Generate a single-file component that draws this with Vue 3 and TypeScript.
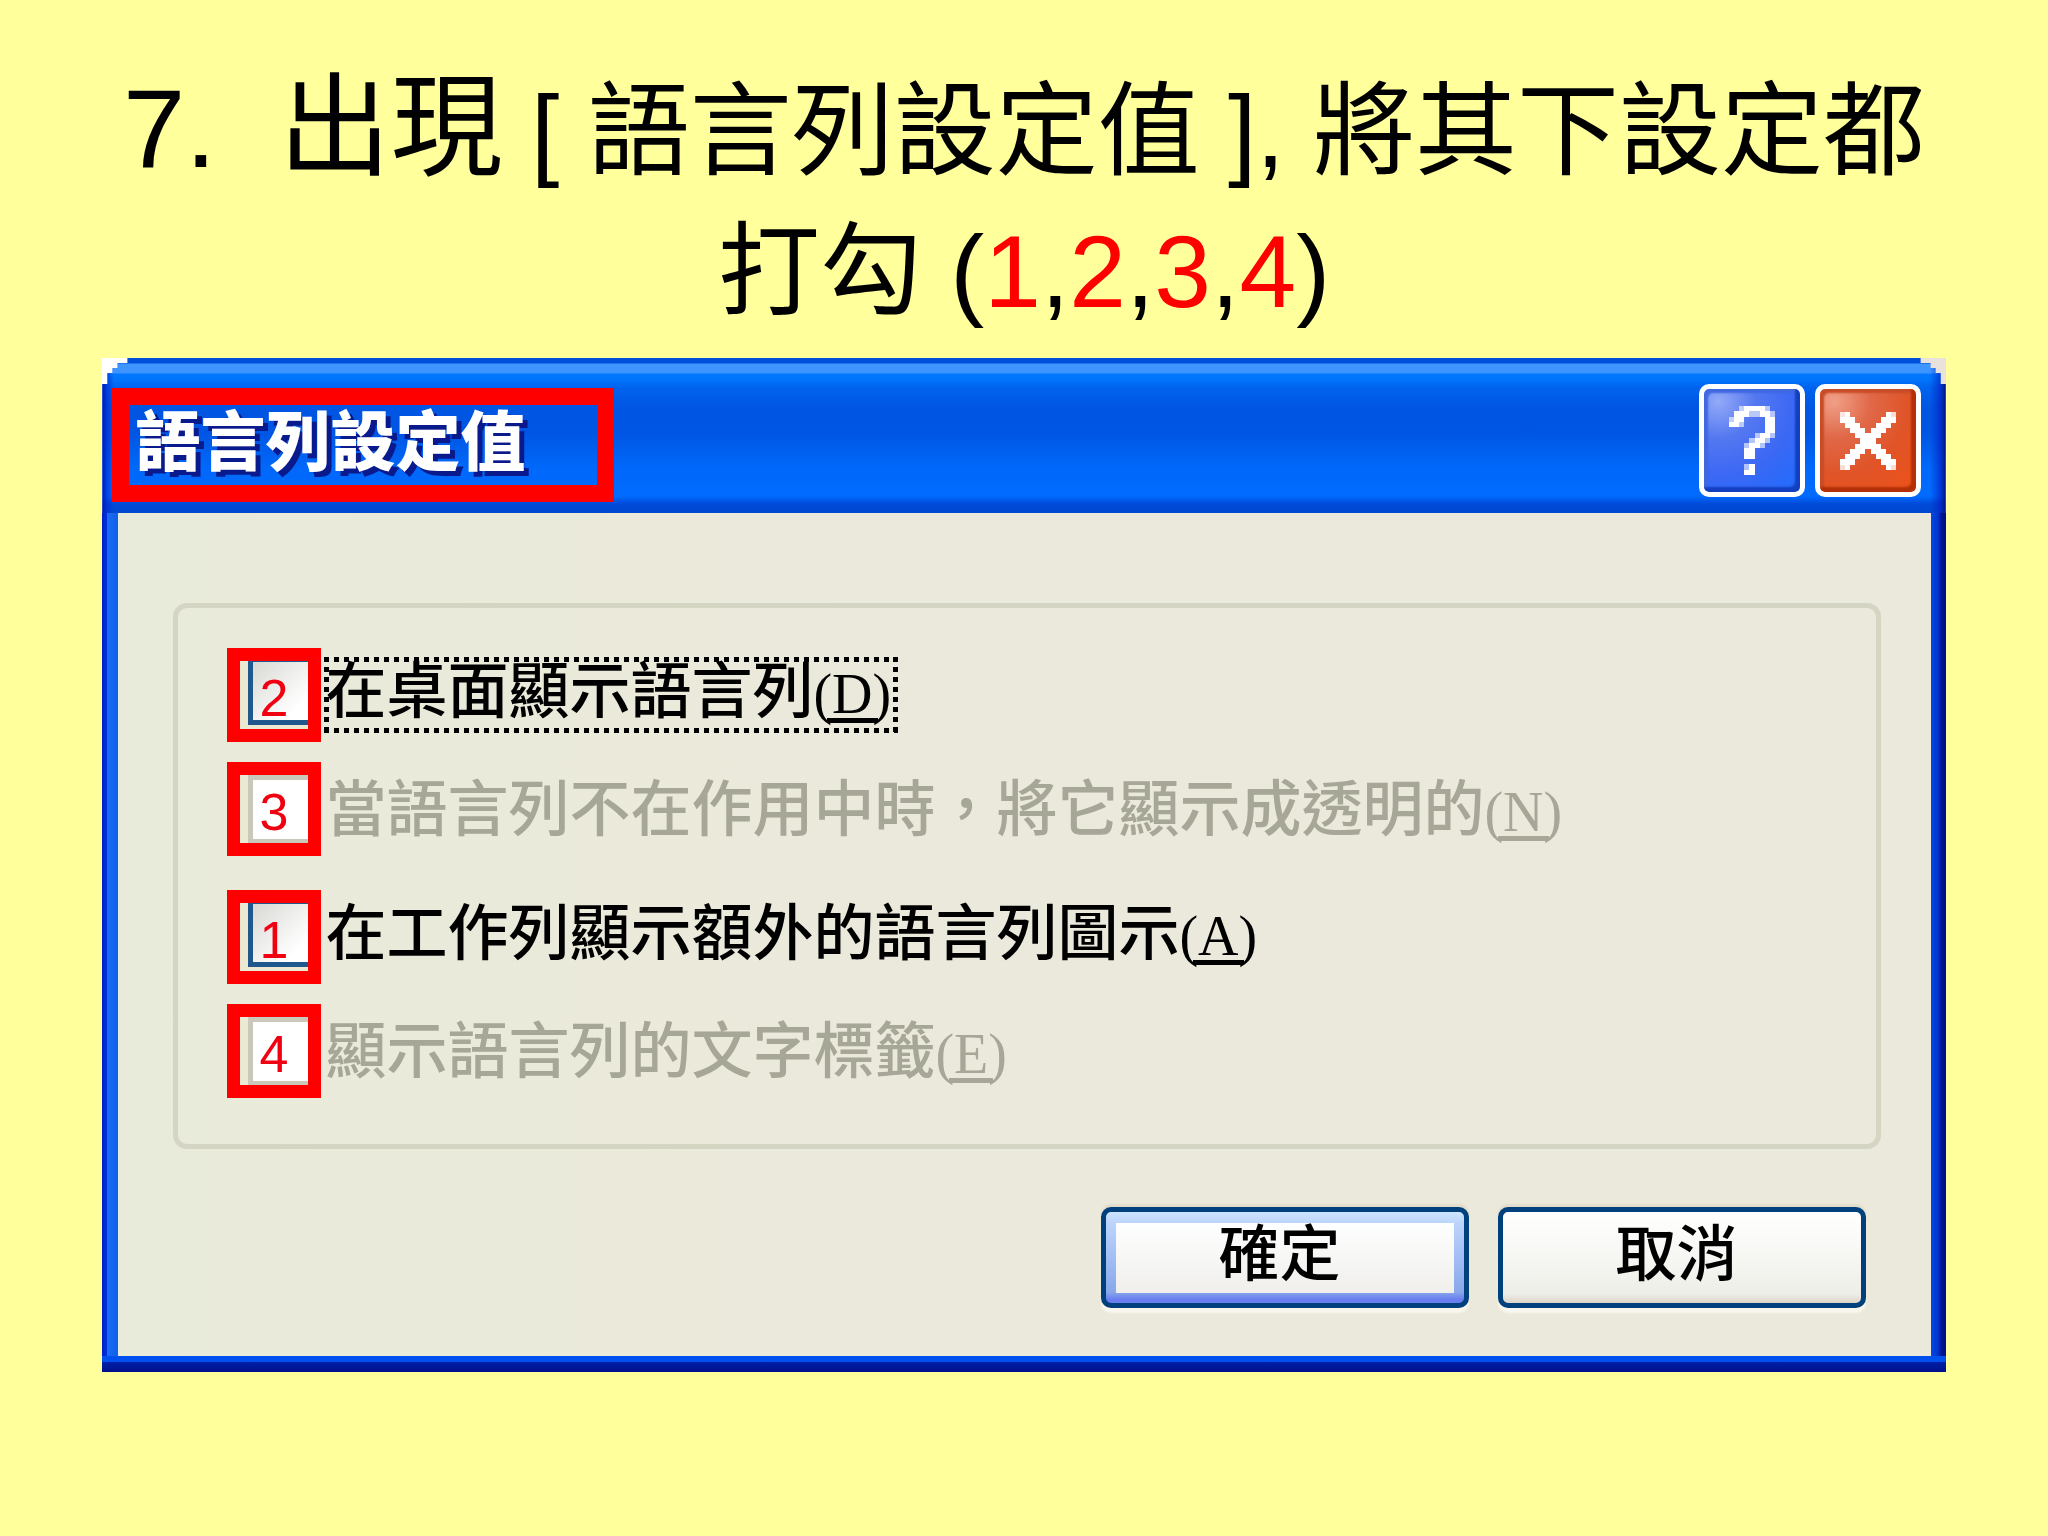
<script setup lang="ts">
import { ref } from 'vue'

interface Option {
  id: string
  mark: string
  text: string
  key: string
  disabled: boolean
  focused: boolean
}

const groups: Option[][] = [
  [
    { id: 'desktop', mark: '2', text: '在桌面顯示語言列', key: 'D', disabled: false, focused: true },
    { id: 'transparent', mark: '3', text: '當語言列不在作用中時，將它顯示成透明的', key: 'N', disabled: true, focused: false },
  ],
  [
    { id: 'taskbar', mark: '1', text: '在工作列顯示額外的語言列圖示', key: 'A', disabled: false, focused: false },
    { id: 'labels', mark: '4', text: '顯示語言列的文字標籤', key: 'E', disabled: true, focused: false },
  ],
]

const checked = ref<string[]>([])

interface Pixel {
  x: number
  y: number
  soft: boolean
}

// "#" is a solid pixel, "+" a softened one
function pixels(rows: string[]): Pixel[] {
  return rows.flatMap((row, y) =>
    [...row].flatMap((c, x) => (c === '.' ? [] : [{ x, y, soft: c === '+' }])),
  )
}

const helpIcon = pixels([
  '..+####+.',
  '.###++##+',
  '+##....##',
  '##+....##',
  '.......##',
  '.....+##+',
  '....+##+.',
  '...+##+..',
  '...##....',
  '...##....',
  '.........',
  '...+#....',
  '...##....',
])

const closeIcon = pixels([
  '+#.......#+',
  '###.....###',
  '.###...###.',
  '..###.###..',
  '...#####...',
  '....###....',
  '...#####...',
  '..###.###..',
  '.###...###.',
  '###.....###',
  '+#.......#+',
])
</script>

<template>
  <main class="slide">
    <h1>
      <span class="lead">7.&nbsp; 出現</span> [ 語言列設定值 ], 將其下設定都<br />
      打勾 (<em>1</em>,<em>2</em>,<em>3</em>,<em>4</em>)
    </h1>

    <section class="dialog" aria-labelledby="dialog-title">
      <header class="titlebar">
        <h2 id="dialog-title">語言列設定值</h2>
        <div class="controls">
          <button type="button" class="ctl help" aria-label="說明">
            <svg viewBox="0 0 9 13" width="46" height="69" preserveAspectRatio="none" shape-rendering="crispEdges">
              <rect v-for="(p, i) in helpIcon" :key="i" :x="p.x" :y="p.y" width="1" height="1" fill="#fff" :opacity="p.soft ? 0.6 : 1" />
            </svg>
          </button>
          <button type="button" class="ctl close" aria-label="關閉">
            <svg viewBox="0 0 11 11" width="56" height="58" preserveAspectRatio="none" shape-rendering="crispEdges">
              <rect v-for="(p, i) in closeIcon" :key="i" :x="p.x" :y="p.y" width="1" height="1" fill="#fff" :opacity="p.soft ? 0.8 : 1" />
            </svg>
          </button>
        </div>
      </header>

      <form class="body" @submit.prevent>
        <fieldset>
          <div v-for="(group, g) in groups" :key="g" class="pair">
            <div v-for="o in group" :key="o.id" class="option" :class="{ disabled: o.disabled }">
              <span class="mark">
                <input :id="o.id" v-model="checked" type="checkbox" :value="o.id" :disabled="o.disabled" />
                <span class="num">{{ o.mark }}</span>
              </span>
              <label :for="o.id" :class="{ focused: o.focused }">{{ o.text }}<span class="key">(<u>{{ o.key }}</u>)</span></label>
            </div>
          </div>
        </fieldset>
        <div class="actions">
          <button type="submit" class="btn primary">確定</button>
          <button type="button" class="btn">取消</button>
        </div>
      </form>
    </section>
  </main>
</template>

<style>
body {
  margin: 0;
  background: #ffff9c;
}
</style>

<style scoped>
.slide {
  box-sizing: border-box;
  min-height: 100vh;
  padding: 59px 5% 0;
  background: #ffff9c;
  font-family: 'Liberation Sans', 'Noto Sans CJK TC', sans-serif;
  color: #000;
}

h1 {
  margin: 0;
  height: 299px;
  font-size: 102px;
  font-weight: 400;
  line-height: 140px;
  text-align: center;
  white-space: nowrap;
}

.lead {
  font-size: 112px;
}

h1 em {
  font-style: normal;
  color: #f00;
}

.dialog {
  background: linear-gradient(90deg, #fff 50%, #e9e2dc 50%);
}

.titlebar {
  display: flex;
  justify-content: space-between;
  align-items: flex-start;
  box-sizing: border-box;
  height: 155px;
  padding: 26px 25px 0 10px;
  background:
    linear-gradient(90deg, #0016b4 0, rgba(0, 40, 210, 0.6) 5px, transparent 12px, transparent calc(100% - 16px), rgba(0, 30, 190, 0.6) calc(100% - 6px), #00108c 100%),
    linear-gradient(#0050dc 0, #0050dc 5px, #4096ff 6px, #3c94ff 15px, #0078ff 16px, #0074fa 22px, #0062ee 30px, #0056e2 50px, #0056e4 75px, #0068fa 110px, #006cff 138px, #004ad8 146px, #0048d0 100%);
  clip-path: polygon(
    0 26px, 5px 26px, 5px 15px, 10px 15px, 10px 10px, 15px 10px, 15px 5px, 25px 5px, 25px 0,
    calc(100% - 25px) 0, calc(100% - 25px) 5px, calc(100% - 15px) 5px, calc(100% - 15px) 10px,
    calc(100% - 10px) 10px, calc(100% - 10px) 15px, calc(100% - 5px) 15px, calc(100% - 5px) 26px,
    100% 26px, 100% 100%, 0 100%
  );
}

h2 {
  box-sizing: border-box;
  width: 502px;
  height: 114px;
  margin: 4px 0 0;
  padding-left: 6px;
  border: 17px solid #f00;
  font-size: 65px;
  font-weight: 900;
  line-height: 76px;
  color: #fff;
  text-shadow: 5px 5px 0 #0a1a8c;
  white-space: nowrap;
}

.controls {
  display: flex;
  gap: 10px;
}

.ctl {
  display: flex;
  align-items: center;
  justify-content: center;
  box-sizing: border-box;
  width: 106px;
  height: 113px;
  padding: 0;
  border: 5px solid #fff;
  border-radius: 10px;
}

.help {
  background: radial-gradient(circle at 15% 12%, #94aaf8 0, #5478f0 30%, #3c68f4 60%, #1e6cff 100%);
  box-shadow: inset -5px -5px 2px #1440c0, inset 4px 4px 2px #4068e0;
}

.close {
  background: radial-gradient(circle at 15% 12%, #f0a088 0, #e06848 30%, #e05428 60%, #ee5218 100%);
  box-shadow: inset -5px -5px 2px #b43008, inset 4px 4px 2px #c84c28;
}

.body {
  padding: 90px 50px 48px 55px;
  border: solid transparent;
  border-width: 0 15px 16px 16px;
  background:
    linear-gradient(90deg, #e9ebda, #ebe9db 40%) padding-box,
    linear-gradient(#0050f0 0, #0050f0 6px, #0020a8 6px, #00108c 16px) left bottom / 100% 16px no-repeat border-box,
    linear-gradient(90deg, #0020cc 0, #0030d8 5px, #1a6cf4 5px, #1060e8 16px, transparent 16px, transparent calc(100% - 15px), #0048e8 calc(100% - 15px), #0034cc calc(100% - 8px), #00108c calc(100% - 4px), #00108c 100%) border-box;
}

fieldset {
  display: flex;
  flex-direction: column;
  gap: 34px;
  margin: 0;
  padding: 40px 49px 46px;
  border: 5px solid #d5d5c4;
  border-radius: 14px;
}

.pair {
  display: flex;
  flex-direction: column;
  gap: 20px;
}

.option {
  display: flex;
  align-items: center;
  gap: 3px;
}

.mark {
  position: relative;
  flex: none;
  box-sizing: border-box;
  width: 94px;
  height: 94px;
  border: 13px solid #f00;
  background: #ece9d2;
  overflow: hidden;
}

input {
  appearance: none;
  display: block;
  box-sizing: border-box;
  width: 65px;
  height: 64px;
  margin: 0 0 0 8px;
  border: solid #20588e;
  border-width: 1px 5px 5px;
  background: linear-gradient(135deg, #d8d8d4, #fff 80%);
}

input:disabled {
  height: 68px;
  border-color: #cac8bb;
  border-width: 5px 5px 4px;
  background: #fff;
}

.num {
  position: absolute;
  inset: 0;
  padding-left: 19px;
  font-size: 52px;
  line-height: 74px;
  color: #f00010;
  pointer-events: none;
}

label {
  height: 76px;
  padding: 0 7px 0 1px;
  font-family: 'Noto Sans CJK TC', sans-serif;
  font-size: 61px;
  font-weight: 500;
  line-height: 60px;
  white-space: nowrap;
}

.disabled label {
  line-height: 68px;
  color: #a7a797;
}

.focused {
  background:
    repeating-linear-gradient(90deg, #000 0 5px, transparent 5px 10px) top / 100% 5px no-repeat,
    repeating-linear-gradient(90deg, #000 0 5px, transparent 5px 10px) bottom / 100% 5px no-repeat,
    repeating-linear-gradient(#000 0 5px, transparent 5px 10px) left / 5px 100% no-repeat,
    repeating-linear-gradient(#000 0 5px, transparent 5px 10px) right / 5px 100% no-repeat;
}

.key {
  font-family: 'Liberation Serif', serif;
  font-size: 56px;
  font-weight: 400;
}

u {
  display: inline-block;
  height: 48px;
  margin: 0 -5px;
  padding: 0 5px;
  border-bottom: 5px solid currentColor;
  line-height: 48px;
  text-decoration: none;
}

.actions {
  display: flex;
  justify-content: flex-end;
  gap: 29px;
  margin-top: 58px;
  padding-right: 15px;
}

.btn {
  box-sizing: border-box;
  width: 368px;
  height: 101px;
  padding: 0 10px 16px 0;
  border: 5px solid #00407c;
  border-radius: 10px;
  background: linear-gradient(#fff, #f6f6f3 50%, #eeeee8 90%, #dcd4c8);
  box-shadow: 0 5px 2px #f8f6ee, 0 -3px 2px #e2dcca;
  font-family: 'Noto Sans CJK TC', sans-serif;
  font-size: 61px;
  font-weight: 500;
  line-height: 75px;
  color: #000;
}

.primary {
  background:
    linear-gradient(#fdfefe, #f0efec) center / calc(100% - 20px) calc(100% - 21px) no-repeat,
    linear-gradient(#cce6ff 0, #bcd4fc 12%, #88a8ec 88%, #6a7ef0 96%);
}
</style>
